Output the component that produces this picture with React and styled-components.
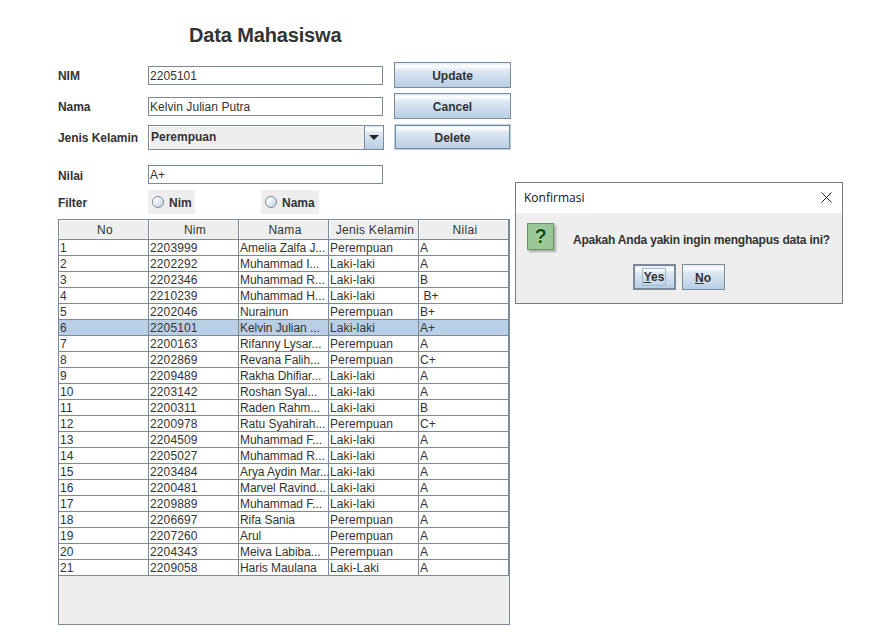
import React from "react";
import styled, { createGlobalStyle } from "styled-components";

const GlobalStyle = createGlobalStyle`
  body {
    margin: 0;
    background: #fff;
    color: #333;
    font-family: "Liberation Sans", Arial, sans-serif;
    font-size: 12px;
  }
`;

const metalGradient = "linear-gradient(#dde8f3 0, #fff 13%, #dde8f3 30%, #b8cfe5 100%)";

const Page = styled.div`
  position: relative;
  width: 870px;
  height: 640px;
  overflow: hidden;
`;

const Main = styled.main`
  display: flex;
  flex-direction: column;
  gap: 5px;
  width: 453px;
  margin-left: 58px;
  padding-top: 23px;
`;

const Title = styled.h1`
  margin: 0 0 10px 131px;
  font-size: 20px;
  line-height: 24px;
  font-weight: 700;
  letter-spacing: -0.15px;
  color: #333;
`;

const Row = styled.div`
  display: grid;
  grid-template-columns: 90px 246px 117px;
  align-items: center;
  height: ${(p) => p.$height || 26}px;
  margin-top: ${(p) => p.$top || 0}px;
`;

const Label = styled.label`
  padding-top: 2px;
  font-weight: 700;
  font-size: 12px;
  letter-spacing: -0.05px;
  color: #333;
`;

const TextField = styled.input`
  box-sizing: border-box;
  width: 235px;
  height: 19px;
  padding: 1px 1px 0;
  border: 1px solid #7a8a99;
  background: #fff;
  color: #333;
  font: 12px "Liberation Sans", Arial, sans-serif;
  letter-spacing: 0.05px;
  outline: none;
`;

const Button = styled.button`
  box-sizing: border-box;
  width: ${(p) => p.$width || 117}px;
  height: 26px;
  padding: 2px 0 0;
  border: 1px solid #7a8a99;
  background: ${metalGradient};
  color: #333;
  font: 700 12px "Liberation Sans", Arial, sans-serif;
`;

const FocusedButton = styled(Button)`
  border: 1px solid #b8cfe5;
  box-shadow: inset 0 0 0 1px #7a8a99;
`;

const Combo = styled.div`
  box-sizing: border-box;
  display: flex;
  width: 236px;
  height: 25px;
  border: 1px solid #7a8a99;
  background: #eee;
`;

const ComboValue = styled.span`
  flex: 1;
  padding: 3px 0 0 2px;
  font-weight: 700;
  line-height: 16px;
  color: #333;
  box-shadow: inset 1px 1px 0 #fff;
`;

const ComboArrow = styled.span`
  display: flex;
  align-items: center;
  justify-content: center;
  width: 18px;
  border-left: 1px solid #7a8a99;
  background: ${metalGradient};
`;

const ArrowGlyph = styled.svg`
  width: 10px;
  height: 5px;
  fill: #222;
`;

const RadioGroup = styled.div`
  display: flex;
`;

const RadioOption = styled.label`
  display: flex;
  align-items: center;
  gap: 5px;
  box-sizing: border-box;
  width: ${(p) => p.$width}px;
  height: 24px;
  margin-right: ${(p) => p.$gap || 0}px;
  padding-left: 4px;
  background: #eee;
  font-weight: 700;
  line-height: 16px;
  color: #333;
`;

const Radio = styled.input.attrs({ type: "radio" })`
  appearance: none;
  box-sizing: border-box;
  width: 12px;
  height: 12px;
  margin: 0;
  border: 1px solid #7a8a99;
  border-radius: 50%;
  background: linear-gradient(135deg, #fff 20%, #dde8f3 60%, #b8cfe5 100%);
`;

const RadioText = styled.span`
  padding-top: 2px;
`;

const TableFrame = styled.div`
  box-sizing: border-box;
  width: 452px;
  height: 406px;
  border: 1px solid #7a8a99;
  background: #eee;
`;

const Table = styled.table`
  width: 450px;
  table-layout: fixed;
  border-collapse: separate;
  border-spacing: 0;
  font-size: 12px;
`;

const HeadCell = styled.th`
  box-sizing: border-box;
  width: 90px;
  height: 20px;
  padding: 1px 0 0 3px;
  border-right: 1px solid #7a8a99;
  border-bottom: 1px solid #7a8a99;
  background: #eee;
  box-shadow: inset 1px 1px 0 #fff;
  font-weight: 400;
  text-align: center;
  letter-spacing: 0.3px;
  color: #333;
`;

const Cell = styled.td`
  box-sizing: border-box;
  height: 16px;
  padding: 1px 0 0 1px;
  border-right: 1px solid #7a8a99;
  border-bottom: 1px solid #7a8a99;
  background: ${(p) => (p.$selected ? "#b8cfe5" : "#fff")};
  line-height: 14px;
  letter-spacing: ${(p) => (p.$tight ? "-0.05px" : "0.12px")};
  color: #333;
  white-space: pre;
`;

const Dialog = styled.section`
  position: absolute;
  left: 515px;
  top: 182px;
  box-sizing: border-box;
  width: 328px;
  height: 122px;
  border: 1px solid #7a7a7a;
  background: #eee;
`;

const DialogBar = styled.header`
  display: flex;
  align-items: center;
  justify-content: space-between;
  height: 30px;
  padding: 0 10px 2px 8px;
  box-sizing: border-box;
  background: #fff;
  font-family: "Open Sans", "Noto Sans", sans-serif;
  font-size: 12px;
  color: #111;
`;

const CloseIcon = styled.svg`
  width: 11px;
  height: 11px;
  stroke: #222;
  stroke-width: 1;
  fill: none;
`;

const DialogMessage = styled.div`
  display: flex;
  align-items: flex-start;
  gap: 19px;
  height: 41px;
  margin-top: 10px;
  padding-left: 11px;
  font-weight: 700;
  letter-spacing: -0.2px;
  line-height: 14px;
  color: #333;
`;

const MessageText = styled.span`
  padding-top: 10px;
`;

const QuestionIcon = styled.span`
  box-sizing: border-box;
  display: flex;
  align-items: center;
  justify-content: center;
  width: 27px;
  height: 27px;
  border: 1px solid #6b946b;
  background: #9ac79a;
  box-shadow: 2px 2px 2px #aaa;
  color: #0c4a0c;
  font: 700 20px "Liberation Sans", sans-serif;
  text-shadow: 0 0 1px #e6ffe6, 0 0 1px #e6ffe6;
`;

const DialogActions = styled.div`
  display: flex;
  justify-content: center;
  gap: 6px;
  padding-right: 1px;
`;

const DefaultButton = styled(Button)`
  padding-top: 0;
  border: 2px solid #7a8a99;
`;

const FocusRing = styled.span`
  display: inline-block;
  padding: 1px;
  border: 1px solid #a3b8cc;
  line-height: 14px;
`;

const rows = [
  ["2203999", "Amelia Zalfa J...", "Perempuan", "A"],
  ["2202292", "Muhammad I...", "Laki-laki", "A"],
  ["2202346", "Muhammad R...", "Laki-laki", "B"],
  ["2210239", "Muhammad H...", "Laki-laki", " B+"],
  ["2202046", "Nurainun", "Perempuan", "B+"],
  ["2205101", "Kelvin Julian ...", "Laki-laki", "A+"],
  ["2200163", "Rifanny Lysar...", "Perempuan", "A"],
  ["2202869", "Revana Falih...", "Perempuan", "C+"],
  ["2209489", "Rakha Dhifiar...", "Laki-laki", "A"],
  ["2203142", "Roshan Syal...", "Laki-laki", "A"],
  ["2200311", "Raden Rahm...", "Laki-laki", "B"],
  ["2200978", "Ratu Syahirah...", "Perempuan", "C+"],
  ["2204509", "Muhammad F...", "Laki-laki", "A"],
  ["2205027", "Muhammad R...", "Laki-laki", "A"],
  ["2203484", "Arya Aydin Mar...", "Laki-laki", "A"],
  ["2200481", "Marvel Ravind...", "Laki-laki", "A"],
  ["2209889", "Muhammad F...", "Laki-laki", "A"],
  ["2206697", "Rifa Sania", "Perempuan", "A"],
  ["2207260", "Arul", "Perempuan", "A"],
  ["2204343", "Meiva Labiba...", "Perempuan", "A"],
  ["2209058", "Haris Maulana", "Laki-Laki", "A"],
];

const columns = ["No", "Nim", "Nama", "Jenis Kelamin", "Nilai"];

const App = () => {
  return (
    <Page>
      <GlobalStyle />
      <Main>
        <Title>Data Mahasiswa</Title>
        <Row>
          <Label>NIM</Label>
          <TextField defaultValue="2205101" />
          <Button>Update</Button>
        </Row>
        <Row>
          <Label>Nama</Label>
          <TextField defaultValue="Kelvin Julian Putra" />
          <Button>Cancel</Button>
        </Row>
        <Row>
          <Label>Jenis Kelamin</Label>
          <Combo>
            <ComboValue>Perempuan</ComboValue>
            <ComboArrow>
              <ArrowGlyph viewBox="0 0 10 5">
                <path d="M0 0h10L5 5z" />
              </ArrowGlyph>
            </ComboArrow>
          </Combo>
          <FocusedButton>Delete</FocusedButton>
        </Row>
        <Row $height={19} $top={10}>
          <Label>Nilai</Label>
          <TextField defaultValue="A+" />
        </Row>
        <Row $height={24} $top={1}>
          <Label>Filter</Label>
          <RadioGroup>
            <RadioOption $width={47} $gap={66}>
              <Radio name="filter" />
              <RadioText>Nim</RadioText>
            </RadioOption>
            <RadioOption $width={58}>
              <Radio name="filter" />
              <RadioText>Nama</RadioText>
            </RadioOption>
          </RadioGroup>
        </Row>
        <TableFrame>
          <Table>
            <thead>
              <tr>
                {columns.map((c) => (
                  <HeadCell key={c}>{c}</HeadCell>
                ))}
              </tr>
            </thead>
            <tbody>
              {rows.map((r, i) => (
                <tr key={r[0]}>
                  <Cell $selected={i === 5}>{i + 1}</Cell>
                  {r.map((v, j) => (
                    <Cell key={j} $selected={i === 5} $tight={j === 1}>
                      {v}
                    </Cell>
                  ))}
                </tr>
              ))}
            </tbody>
          </Table>
        </TableFrame>
      </Main>

      <Dialog>
        <DialogBar>
          Konfirmasi
          <CloseIcon viewBox="0 0 11 11">
            <path d="M0.5 0.5l10 10M10.5 0.5l-10 10" />
          </CloseIcon>
        </DialogBar>
        <DialogMessage>
          <QuestionIcon>?</QuestionIcon>
          <MessageText>Apakah Anda yakin ingin menghapus data ini?</MessageText>
        </DialogMessage>
        <DialogActions>
          <DefaultButton $width={43}>
            <FocusRing>
              <u>Y</u>es
            </FocusRing>
          </DefaultButton>
          <Button $width={43}>
            <u>N</u>o
          </Button>
        </DialogActions>
      </Dialog>
    </Page>
  );
};

export default App;
